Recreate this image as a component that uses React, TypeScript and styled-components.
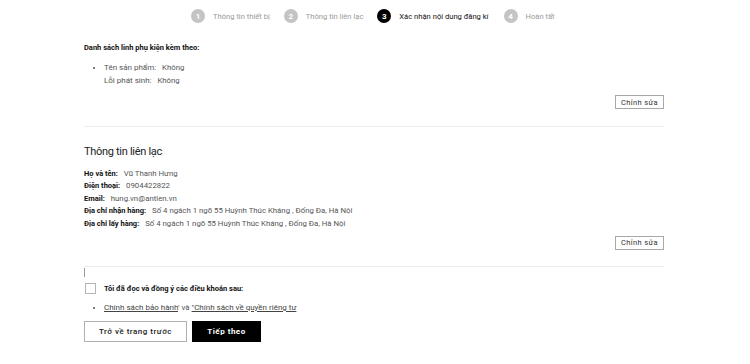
import React from "react";
import styled, { createGlobalStyle } from "styled-components";

const GlobalStyle = createGlobalStyle`
  html, body {
    margin: 0;
    padding: 0;
    background: #ffffff;
    font-family: Roboto, "Liberation Sans", Arial, sans-serif;
    color: #222222;
  }
  * {
    box-sizing: border-box;
  }
`;

const Page = styled.div`
  width: 750px;
  height: 364px;
  overflow: hidden;
`;

const Stepper = styled.ol`
  display: flex;
  align-items: center;
  margin: 0;
  padding: 0 0 0 191px;
  list-style: none;
  height: 32px;
`;

const Step = styled.li<{ $active?: boolean; $gap: number }>`
  display: flex;
  align-items: center;
  margin-right: ${(p) => p.$gap}px;
  font-size: 7.6px;
  color: ${(p) => (p.$active ? "#111111" : "#9a9a9a")};
`;

const StepNum = styled.span<{ $active?: boolean }>`
  width: 14px;
  height: 14px;
  border-radius: 50%;
  display: inline-flex;
  align-items: center;
  justify-content: center;
  margin-right: 8px;
  font-size: 8px;
  font-weight: 700;
  color: #ffffff;
  background: ${(p) => (p.$active ? "#000000" : "#c4c4c4")};
`;

const Content = styled.div`
  width: 580px;
  margin-left: 84px;
`;

const Section = styled.section<{ $pad: string }>`
  padding: ${(p) => p.$pad};
  border-bottom: 1px solid #ececec;
`;

const Label = styled.div`
  font-size: 7.5px;
  font-weight: 700;
  color: #111111;
  line-height: 12px;
`;

const BulletList = styled.ul`
  margin: 0;
  padding: 0 0 0 20px;
  list-style: disc;
  font-size: 8px;
  line-height: 12.5px;
  color: #555555;
  li::marker {
    font-size: 7px;
  }
`;

const Value = styled.span`
  margin-left: 4px;
  font-size: 7.8px;
  font-weight: 400;
  color: #555555;
`;

const EditRow = styled.div`
  display: flex;
  justify-content: flex-end;
`;

const EditButton = styled.button`
  height: 14px;
  width: 49px;
  padding: 0;
  border: 1px solid #a8a8a8;
  background: #ffffff;
  font-family: inherit;
  font-size: 7.5px;
  letter-spacing: 0.4px;
  color: #333333;
`;

const Heading = styled.h3`
  margin: 0 0 8px;
  font-size: 11px;
  letter-spacing: -0.3px;
  font-weight: 400;
  color: #222222;
  line-height: 16px;
`;

const InfoLine = styled.div`
  display: flex;
  align-items: baseline;
  height: 12.4px;
  font-size: 7.5px;
  line-height: 12px;
  color: #555555;
  white-space: pre;
  b {
    color: #111111;
    font-weight: 700;
  }
`;

const Caret = styled.div`
  width: 1px;
  height: 9px;
  margin-top: 1px;
  background: #999999;
`;

const CheckRow = styled.label`
  display: flex;
  align-items: center;
  margin-top: 6px;
  margin-left: 1px;
  font-size: 7.5px;
  font-weight: 700;
  color: #111111;
`;

const CheckBox = styled.span`
  width: 11px;
  height: 11px;
  border: 1px solid #b5b5b5;
  margin-right: 8px;
`;

const PolicyList = styled(BulletList)`
  margin-top: 8px;
  padding-left: 20px;
  a {
    color: #444444;
    text-decoration: underline;
  }
`;

const Actions = styled.div`
  display: flex;
  gap: 5px;
  margin-top: 7px;
`;

const ActionButton = styled.button<{ $primary?: boolean }>`
  height: 21px;
  width: ${(p) => (p.$primary ? "69px" : "103px")};
  padding: 0;
  border: 1px solid ${(p) => (p.$primary ? "#000000" : "#b0b0b0")};
  background: ${(p) => (p.$primary ? "#000000" : "#ffffff")};
  color: ${(p) => (p.$primary ? "#ffffff" : "#222222")};
  font-family: inherit;
  font-size: 8px;
  font-weight: ${(p) => (p.$primary ? 700 : 500)};
  letter-spacing: 0.5px;
`;

const steps = [
  { n: 1, label: "Thông tin thiết bị", gap: 14 },
  { n: 2, label: "Thông tin liên lạc", gap: 14 },
  { n: 3, label: "Xác nhận nội dung đăng kí", gap: 15, active: true },
  { n: 4, label: "Hoàn tất", gap: 0 },
];

const App = () => {
  return (
    <Page>
      <GlobalStyle />
      <Stepper>
        {steps.map((s) => (
          <Step key={s.n} $active={s.active} $gap={s.gap}>
            <StepNum $active={s.active}>{s.n}</StepNum>
            {s.label}
          </Step>
        ))}
      </Stepper>
      <Content>
        <Section $pad="10px 0 17px">
          <Label>Danh sách linh phụ kiện kèm theo:</Label>
          <BulletList style={{ marginTop: 8 }}>
            <li>
              Tên sản phẩm:<Value> Không</Value>
              <br />
              Lỗi phát sinh:<Value> Không</Value>
            </li>
          </BulletList>
          <EditRow style={{ marginTop: 8 }}>
            <EditButton>Chỉnh sửa</EditButton>
          </EditRow>
        </Section>
        <Section $pad="17px 0 16px">
          <Heading>Thông tin liên lạc</Heading>
          <InfoLine>
            <b>Họ và tên:</b>
            <Value> Vũ Thanh Hưng</Value>
          </InfoLine>
          <InfoLine>
            <b>Điện thoại:</b>
            <Value> 0904422822</Value>
          </InfoLine>
          <InfoLine>
            <b>Email:</b>
            <Value> hung.vn@antien.vn</Value>
          </InfoLine>
          <InfoLine>
            <b>Địa chỉ nhận hàng:</b>
            <Value> Số 4 ngách 1 ngõ 55 Huỳnh Thúc Kháng , Đống Đa, Hà Nội</Value>
          </InfoLine>
          <InfoLine>
            <b>Địa chỉ lấy hàng:</b>
            <Value> Số 4 ngách 1 ngõ 55 Huỳnh Thúc Kháng , Đống Đa, Hà Nội</Value>
          </InfoLine>
          <EditRow style={{ marginTop: 6 }}>
            <EditButton>Chỉnh sửa</EditButton>
          </EditRow>
        </Section>
        <Caret />
        <CheckRow>
          <CheckBox />
          Tôi đã đọc và đồng ý các điều khoản sau:
        </CheckRow>
        <PolicyList>
          <li>
            <a>Chính sách bảo hành</a>' và <a>"Chính sách về quyền riêng tư</a>
          </li>
        </PolicyList>
        <Actions>
          <ActionButton>Trở về trang trước</ActionButton>
          <ActionButton $primary>Tiếp theo</ActionButton>
        </Actions>
      </Content>
    </Page>
  );
};

export default App;
